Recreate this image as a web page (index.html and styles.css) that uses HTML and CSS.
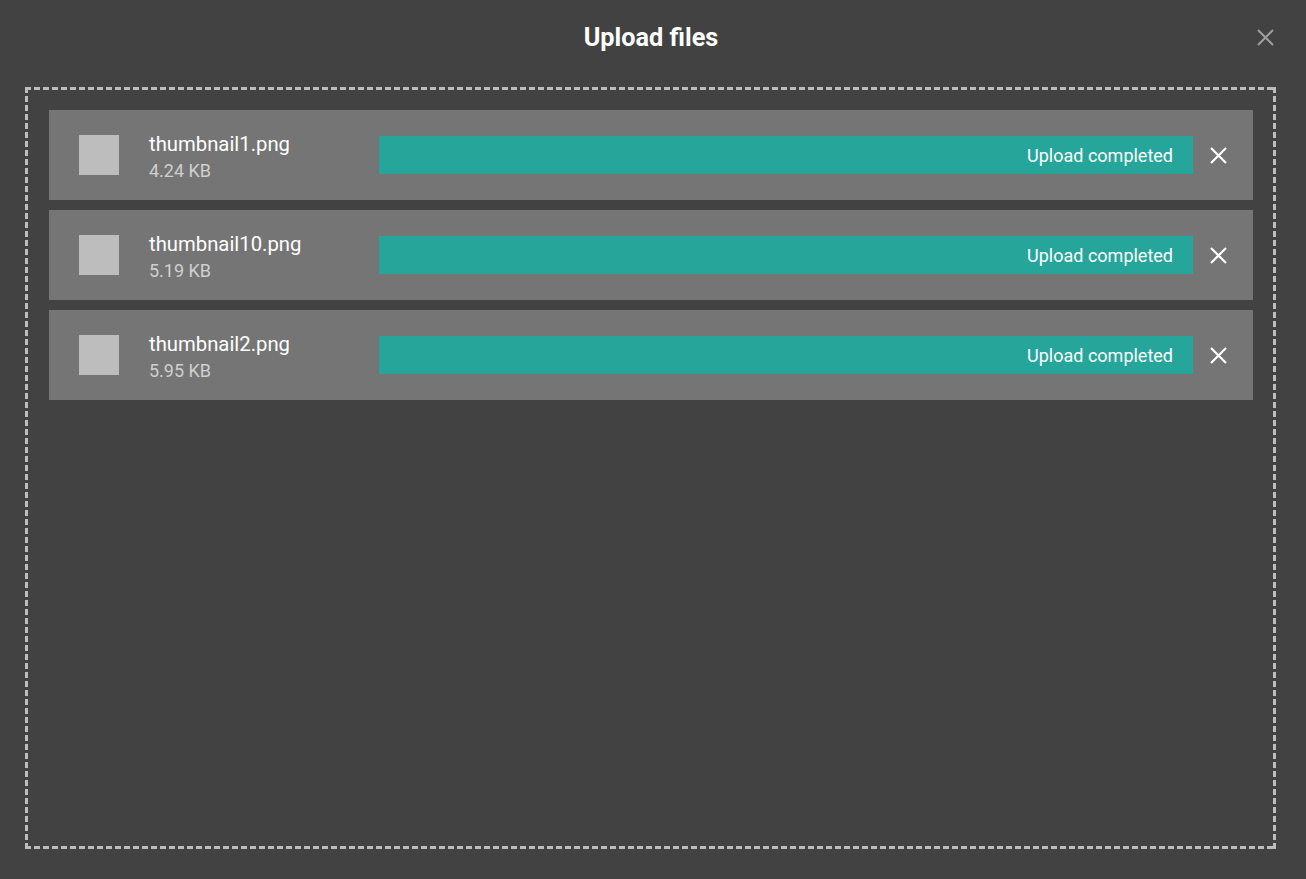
FILE: index.html
```html
<!DOCTYPE html>
<html>
<head>
<meta charset="utf-8">
<link rel="stylesheet" href="styles.css">
</head>
<body>
<div class="header">
  <h1 class="title">Upload files</h1>
  <button class="close-dialog" aria-label="Close">
    <svg width="17" height="17" viewBox="0 0 17 17"><path d="M1 1L16 16M16 1L1 16" stroke="#9e9e9e" stroke-width="2" fill="none"/></svg>
  </button>
</div>
<div class="dropzone">
  <div class="file-row">
    <div class="thumb"></div>
    <div class="info">
      <div class="name">thumbnail1.png</div>
      <div class="size">4.24 KB</div>
    </div>
    <div class="bar"><span>Upload completed</span></div>
    <div class="remove"><svg width="17" height="17" viewBox="0 0 17 17"><path d="M1 1L16 16M16 1L1 16" stroke="#fff" stroke-width="2.2" fill="none"/></svg></div>
  </div>
  <div class="file-row">
    <div class="thumb"></div>
    <div class="info">
      <div class="name">thumbnail10.png</div>
      <div class="size">5.19 KB</div>
    </div>
    <div class="bar"><span>Upload completed</span></div>
    <div class="remove"><svg width="17" height="17" viewBox="0 0 17 17"><path d="M1 1L16 16M16 1L1 16" stroke="#fff" stroke-width="2.2" fill="none"/></svg></div>
  </div>
  <div class="file-row">
    <div class="thumb"></div>
    <div class="info">
      <div class="name">thumbnail2.png</div>
      <div class="size">5.95 KB</div>
    </div>
    <div class="bar"><span>Upload completed</span></div>
    <div class="remove"><svg width="17" height="17" viewBox="0 0 17 17"><path d="M1 1L16 16M16 1L1 16" stroke="#fff" stroke-width="2.2" fill="none"/></svg></div>
  </div>
</div>
</body>
</html>
```
FILE: styles.css
```css
html, body {
  margin: 0;
  padding: 0;
  background: #424242;
  font-family: Roboto, "Liberation Sans", sans-serif;
  color: #fff;
  height: 100%;
  overflow: hidden;
}
.header {
  position: relative;
  height: 75px;
  display: flex;
  align-items: center;
  justify-content: center;
  padding-right: 4px;
}
.title {
  margin: 0;
  font-size: 25.3px;
  font-weight: 700;
  line-height: 30px;
}
.close-dialog {
  position: absolute;
  right: 32px;
  top: 29px;
  width: 17px;
  height: 17px;
  padding: 0;
  border: 0;
  background: none;
  display: block;
}
.close-dialog svg { display: block; }
.dropzone {
  margin: 12px 30px 30px 25px;
  height: 762px;
  box-sizing: border-box;
  padding: 23px 23px 23px 24px;
  background:
    repeating-linear-gradient(90deg, #bdbdbd 0 6px, transparent 6px 9px) top left / 100% 3px no-repeat,
    repeating-linear-gradient(90deg, #bdbdbd 0 6px, transparent 6px 9px) bottom left / 100% 3px no-repeat,
    repeating-linear-gradient(180deg, #bdbdbd 0 6px, transparent 6px 9px) top left / 3px 100% no-repeat,
    repeating-linear-gradient(180deg, #bdbdbd 0 6px, transparent 6px 9px) top right / 3px 100% no-repeat;
  display: flex;
  flex-direction: column;
  gap: 10px;
}
.file-row {
  height: 90px;
  background: #757575;
  display: flex;
  align-items: center;
  padding: 0 26px 0 30px;
}
.thumb {
  width: 40px;
  height: 40px;
  background: #bdbdbd;
  flex: none;
}
.info {
  width: 230px;
  margin-left: 30px;
  padding-top: 4px;
  flex: none;
}
.name {
  font-size: 20.3px;
  line-height: 24px;
  color: #fff;
}
.size {
  font-size: 18px;
  line-height: 22px;
  color: #cfcfcf;
  margin-top: 4px;
}
.bar {
  flex: 1;
  height: 38px;
  background: #26a69a;
  display: flex;
  align-items: center;
  justify-content: flex-end;
  padding-right: 20px;
  font-size: 18px;
}
.remove {
  margin-left: 17px;
  width: 17px;
  height: 17px;
}
.remove svg { display: block; }
```
